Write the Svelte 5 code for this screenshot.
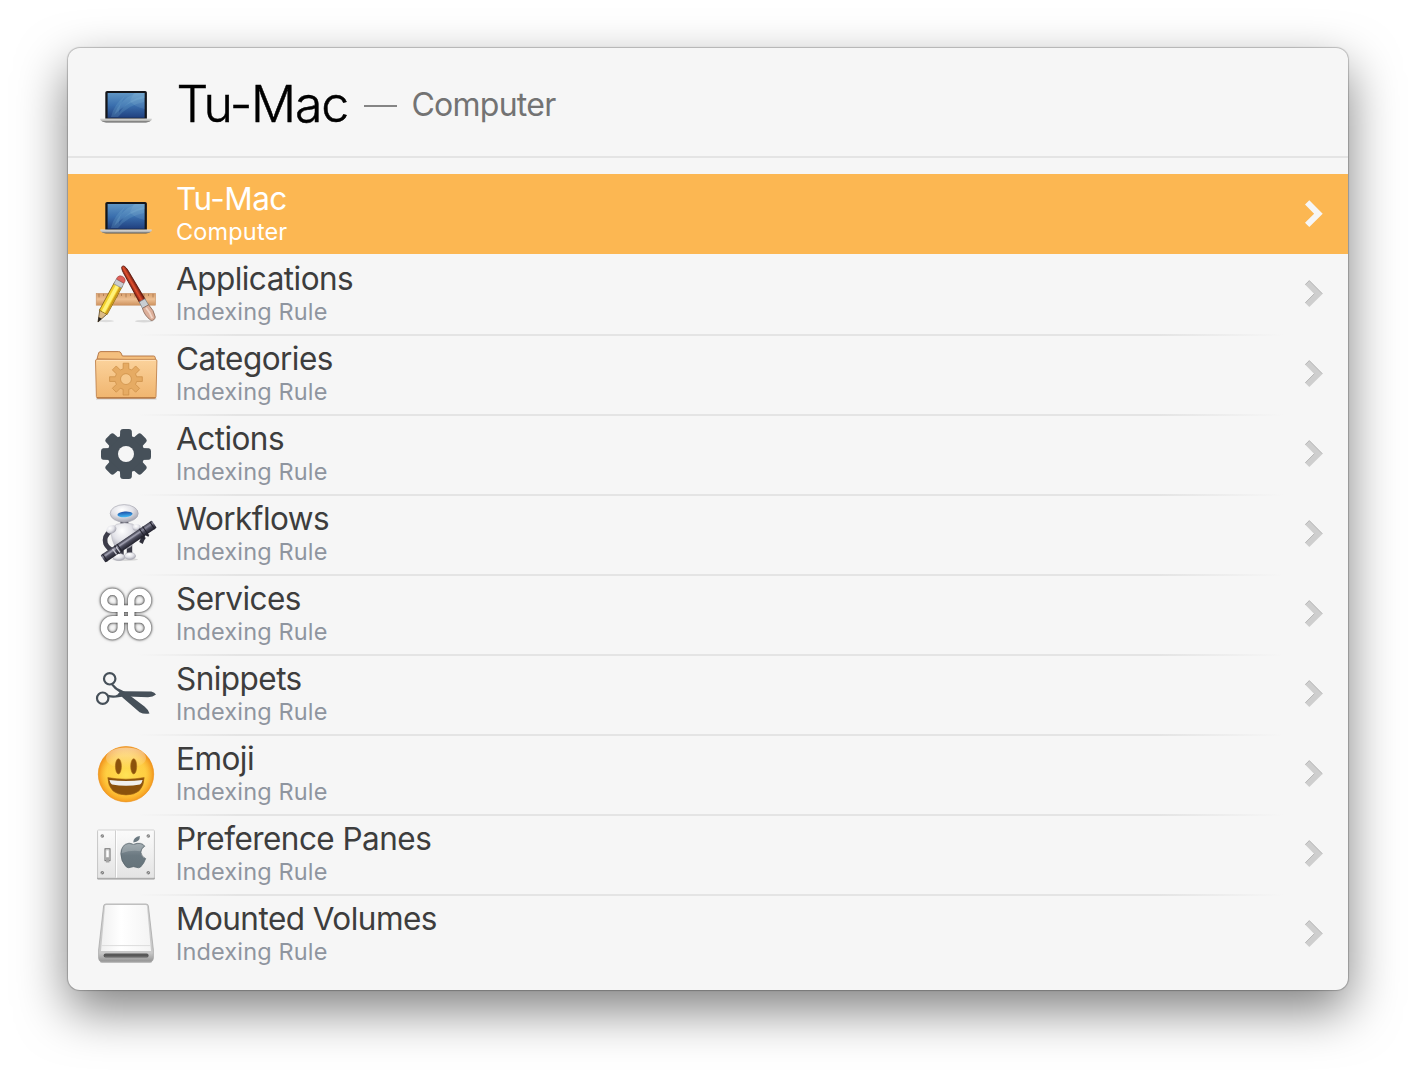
<script>
  const rows = [
    { icon: 'laptop', title: 'Tu-Mac', sub: 'Computer', selected: true },
    { icon: 'apps', title: 'Applications' },
    { icon: 'folder', title: 'Categories' },
    { icon: 'gear', title: 'Actions' },
    { icon: 'robot', title: 'Workflows' },
    { icon: 'command', title: 'Services' },
    { icon: 'scissors', title: 'Snippets' },
    { icon: 'emoji', title: 'Emoji' },
    { icon: 'prefs', title: 'Preference Panes' },
    { icon: 'drive', title: 'Mounted Volumes' }
  ];
  const teeth = [0, 45, 90, 135, 180, 225, 270, 315];
  const ticks = Array.from({ length: 13 }, (_, i) => 5 + i * 4.5);
</script>

{#snippet gearShape()}
  <mask id="gear-hole">
    <rect width="64" height="64" fill="#fff" />
    <circle cx="32" cy="32" r="8" fill="#000" />
  </mask>
  <g mask="url(#gear-hole)">
    <circle cx="32" cy="32" r="18.6" />
    {#each teeth as a}
      <path d="M25.9 16 L26.2 9 Q26.6 7 29 7 H35 Q37.4 7 37.8 9 L38.1 16Z" transform="rotate({a} 32 32)" />
    {/each}
  </g>
{/snippet}

{#snippet icon(name)}
  <svg class="icon" viewBox="0 0 64 64" aria-hidden="true">
    {#if name === 'laptop'}
      <defs>
        <linearGradient id="lap-scr" x1="0" y1="0" x2="0" y2="1">
          <stop offset="0" stop-color="#5f95c4" /><stop offset=".5" stop-color="#3a6fae" /><stop offset="1" stop-color="#20407f" />
        </linearGradient>
        <linearGradient id="lap-base" x1="0" y1="0" x2="0" y2="1">
          <stop offset="0" stop-color="#ddd" /><stop offset=".5" stop-color="#bbbbb8" /><stop offset="1" stop-color="#555" />
        </linearGradient>
      </defs>
      <rect x="11.3" y="20" width="41.6" height="29" rx="1.8" fill="#14161b" />
      <rect x="13.6" y="22" width="37" height="24.8" fill="url(#lap-scr)" />
      <path d="M17 46 Q20 33 31 25 Q25 34 25 42 Q34 28 50 25 V31 Q34 34 24 46Z" fill="#7db6d8" opacity=".22" />
      <path d="M20 44 Q26 28 42 22 H50.6 V27 Q34 30 20 44Z" fill="#8cc3e0" opacity=".2" />
      <path d="M40 22 H50.6 V38 Q39 35 36 30Z" fill="#b9d7ea" opacity=".12" />
      <path d="M6.3 47.6 H57.7 V49 Q56 51.4 52 51.4 H12 Q8 51.4 6.3 49Z" fill="url(#lap-base)" />
    {:else if name === 'apps'}
      <defs>
        <linearGradient id="ruler" x1="0" y1="0" x2="0" y2="1">
          <stop offset="0" stop-color="#d99e6b" /><stop offset=".5" stop-color="#edbf92" /><stop offset="1" stop-color="#cf935f" />
        </linearGradient>
        <linearGradient id="brush" x1="0" y1="0" x2="1" y2="0">
          <stop offset="0" stop-color="#7a1d10" /><stop offset=".45" stop-color="#e2502f" /><stop offset="1" stop-color="#5e150c" />
        </linearGradient>
      </defs>
      <ellipse cx="12" cy="59" rx="8" ry="1.2" fill="#000" opacity=".1" />
      <ellipse cx="50" cy="59.2" rx="9" ry="1.2" fill="#000" opacity=".12" />
      <rect x="2.2" y="31.4" width="59.4" height="11.8" fill="url(#ruler)" stroke="#c99468" stroke-width=".6" />
      {#each ticks as x, i}
        <path d="M{x} 31.8 v{i % 2 ? 2.2 : 3.6}" stroke="#9c7048" stroke-width=".7" />
      {/each}
      <g transform="translate(4 60) rotate(28.5)">
        <path d="M0 0 L-4.4 -12 H4.4Z" fill="#dcbb85" stroke="#6a5330" stroke-width=".8" />
        <path d="M0 .4 L-1.8 -4.6 H1.8Z" fill="#252321" />
        <rect x="-4.4" y="-43" width="8.8" height="32" fill="#f2cf2d" stroke="#8a6a18" stroke-width=".8" />
        <rect x="-2" y="-43" width="3.4" height="31.6" fill="#fff27a" />
        <rect x="2.4" y="-43" width="1.7" height="31.6" fill="#cb981b" />
        <rect x="-4.4" y="-46.5" width="8.8" height="5.4" fill="#c9ccd0" stroke="#7d8288" stroke-width=".6" />
        <path d="M-4.3 -46.5 V-49 Q-3.4 -51.8 0 -51.8 Q3.4 -51.8 4.3 -49 V-46.5Z" fill="#e0605a" stroke="#943a34" stroke-width=".5" />
      </g>
      <g transform="translate(28.4 4.2) rotate(-29.5)">
        <path d="M0 0 Q2.4 0 2.8 6 L3.5 40 H-3 L-2.4 6 Q-2 0 0 0Z" fill="url(#brush)" stroke="#5a170e" stroke-width=".8" />
        <path d="M-3 39.4 H3.5 L3.8 47 H-3.3Z" fill="#c9ced2" stroke="#6f777d" stroke-width=".6" />
        <path d="M-3.3 46.5 H3.8 Q5.8 54 3.6 60.4 Q1 63.4 -1.8 61.2 Q-5.2 54 -3.3 46.5Z" fill="#dcae99" stroke="#80604f" stroke-width=".7" />
        <path d="M0 48 Q1.4 54 .4 60" stroke="#f1d6c7" stroke-width="1.8" fill="none" />
      </g>
    {:else if name === 'folder'}
      <defs>
        <linearGradient id="fold" x1="0" y1="0" x2="0" y2="1">
          <stop offset="0" stop-color="#fbd29b" /><stop offset="1" stop-color="#f0b56f" />
        </linearGradient>
      </defs>
      <path d="M2 57 H62.6" stroke="#000" stroke-opacity=".18" stroke-width="1" />
      <path d="M3 17 L4.6 11 Q5 9.6 7 9.6 H24.6 Q26.4 9.6 27 11 L28.4 14 H59.6 Q61 14 61.2 15.4 L61.6 18Z" fill="#f4bf7e" stroke="#b1713f" stroke-width=".9" />
      <path d="M1.5 19 Q1.4 17.4 3 17.4 H61.4 Q63 17.4 62.9 19 L62 54.6 Q62 56.1 60.4 56.1 H4 Q2.4 56.1 2.4 54.6Z" fill="url(#fold)" stroke="#bf824c" stroke-width=".9" />
      <path d="M2.8 18.4 H61.6" stroke="#ffe4bc" stroke-width="1" />
      <path d="M3 55.9 H61.6" stroke="#a0602f" stroke-width=".9" />
      <g transform="translate(11.8 16.8) scale(.63)" fill="#e6ab63" stroke="#cd9048" stroke-width="1.2">
        <path d="M27.5 7 h9 v9 l4.5 1.8 6.4-6.4 6.2 6.2 -6.4 6.4 1.8 4.5 h9 v7.5 h-9 l-1.8 4.5 6.4 6.4 -6.2 6.2 -6.4-6.4 -4.5 1.8 v9 h-9 v-9 l-4.5-1.8 -6.4 6.4 -6.2-6.2 6.4-6.4 -1.8-4.5 h-9 v-7.5 h9 l1.8-4.5 -6.4-6.4 6.2-6.2 6.4 6.4 4.5-1.8Z" />
        <circle cx="32" cy="32.2" r="8.6" fill="#f6c98d" />
      </g>
    {:else if name === 'gear'}
      <g fill="#465059">{@render gearShape()}</g>
    {:else if name === 'robot'}
      <defs>
        <radialGradient id="rob" cx=".42" cy=".3" r=".75">
          <stop offset="0" stop-color="#fff" /><stop offset=".5" stop-color="#e2e2e8" /><stop offset="1" stop-color="#9a9aa6" />
        </radialGradient>
        <linearGradient id="tube" x1="0" y1="0" x2="0" y2="1">
          <stop offset="0" stop-color="#3a3a48" /><stop offset=".3" stop-color="#8d8d9e" /><stop offset=".55" stop-color="#4a4a5a" /><stop offset="1" stop-color="#20202b" />
        </linearGradient>
        <linearGradient id="eye" x1="0" y1="0" x2="0" y2="1">
          <stop offset="0" stop-color="#1c4fa8" /><stop offset="1" stop-color="#45bdf7" />
        </linearGradient>
      </defs>
      <ellipse cx="31" cy="57.6" rx="13" ry="1.4" fill="#000" opacity=".12" />
      <path d="M16.6 29 Q9.5 34 11.5 41.5 Q14 47 20 49" fill="none" stroke="#3c3c49" stroke-width="4.6" />
      <path d="M46 28 Q51 34 47 41" fill="none" stroke="#30303b" stroke-width="4" />
      <path d="M27 44 V53 M35.5 43 V52" stroke="#3a3a46" stroke-width="5.4" />
      <ellipse cx="24.8" cy="55" rx="6.2" ry="3.6" fill="url(#rob)" stroke="#a2a2ac" stroke-width=".5" />
      <ellipse cx="36" cy="54" rx="5.6" ry="3.6" fill="url(#rob)" stroke="#a2a2ac" stroke-width=".5" />
      <rect x="26.4" y="17.6" width="8" height="6" rx="1" fill="#4a4a58" />
      <path d="M22.4 22.4 Q30 19.6 38.4 22 L43 25.6 Q43 39 37 44.6 Q30 49.4 22 45.6 Q16.6 38 17.4 27Z" fill="url(#rob)" stroke="#b5b5be" stroke-width=".6" />
      <ellipse cx="17.4" cy="27.4" rx="5.2" ry="4" fill="url(#rob)" transform="rotate(-25 17.4 27.4)" />
      <ellipse cx="42.6" cy="25.4" rx="4" ry="3.2" fill="url(#rob)" />
      <ellipse cx="30.2" cy="11.4" rx="14" ry="8.8" fill="url(#rob)" stroke="#a8a8b2" stroke-width=".7" />
      <ellipse cx="31" cy="12.4" rx="7.6" ry="2.8" fill="url(#eye)" transform="rotate(-4 31 12.4)" />
      <g transform="translate(9 57) rotate(-34.2)">
        <rect x="0" y="-4.4" width="62" height="8.8" rx="1" fill="url(#tube)" />
        <path d="M2.4 -4.4 V4.4 M17 -4.6 V4.8 M20 -4.6 V4.8 M47 -4.6 V4.8 M51 -4.6 V4.8 M59.6 -4.4 V4.4" stroke="#23232d" stroke-width="1" />
        <path d="M4 -1.7 H16 M21 -1.7 H46" stroke="#9c9cac" stroke-width="1.4" />
        <path d="M44 3 L46.4 7 M49 3 L51 6.6" stroke="#262630" stroke-width="2.2" />
      </g>
      <path d="M18.6 47 l4 5.4 M22 45 l4 5.4" stroke="#c5c5cf" stroke-width="1.4" />
    {:else if name === 'command'}
      <g fill="none" class="command">
        <path d="M26.8 18.2 V45.8 A8.4 8.4 0 1 1 18.4 37.4 H45.6 A8.4 8.4 0 1 1 37.2 45.8 V18.2 A8.4 8.4 0 1 1 45.6 26.6 H18.4 A8.4 8.4 0 1 1 26.8 18.2Z" stroke="#fff" stroke-width="6.6" />
      </g>
    {:else if name === 'scissors'}
      <g fill="#465059" transform="translate(0 .8)">
        <circle cx="15.7" cy="16" r="5.7" fill="none" stroke="#465059" stroke-width="2.2" />
        <circle cx="8.7" cy="35.4" r="5.7" fill="none" stroke="#465059" stroke-width="2.2" />
        <path d="M18.6 20.6 Q22.5 25.4 27.4 27.3 Q31.5 29.3 34.5 31.6 L50.5 43.6 Q54.5 46.8 55.5 50.7 Q50 51.8 45.6 49.4 L28.8 35 Q26.2 32.6 25.3 29.4 Q20.6 27 17 22Z" />
        <path d="M14 32 Q18 33 21.4 32.6 Q24 32 25 30 Q27 28.3 30 28.4 L57.3 28.6 Q60.8 29.3 62 31.8 Q59 34.4 54 34.4 L34 33.8 Q29.5 33.3 26 34.1 Q19.6 35.4 14.3 34.4Z" />
      </g>
    {:else if name === 'emoji'}
      <defs>
        <linearGradient id="face" x1="0" y1="0" x2="0" y2="1">
          <stop offset="0" stop-color="#fdc550" /><stop offset=".5" stop-color="#ffd246" /><stop offset="1" stop-color="#ffb52c" />
        </linearGradient>
        <radialGradient id="faceglow" cx=".5" cy=".52" r=".5">
          <stop offset="0" stop-color="#ffe75a" stop-opacity=".85" /><stop offset=".7" stop-color="#ffcb3c" stop-opacity=".4" /><stop offset="1" stop-color="#ef8b16" stop-opacity=".85" />
        </radialGradient>
        <linearGradient id="shine" x1="0" y1="0" x2="0" y2="1">
          <stop offset="0" stop-color="#fff" stop-opacity=".5" /><stop offset="1" stop-color="#fff" stop-opacity="0" />
        </linearGradient>
      </defs>
      <circle cx="32" cy="32.2" r="27.7" fill="url(#face)" />
      <circle cx="32" cy="32.2" r="27.7" fill="url(#faceglow)" stroke="#eb9425" stroke-width=".6" />
      <ellipse cx="32" cy="16" rx="20" ry="10.5" fill="url(#shine)" />
      <g fill="#8b520c" stroke="#a96b16" stroke-width=".6">
        <ellipse cx="24.4" cy="24.3" rx="3" ry="7.6" /><ellipse cx="39.7" cy="24.3" rx="3" ry="7.6" />
        <path d="M13.8 35.6 Q32 38.8 50.2 35.6 Q49.5 53 32 53 Q14.5 53 13.8 35.6Z" />
      </g>
      <path d="M15.4 38 Q32 40.2 48.6 38 Q48 41 46 42.4 Q32 45 18 42.4 Q16 41 15.4 38Z" fill="#f0f0ee" />
    {:else if name === 'prefs'}
      <defs>
        <linearGradient id="plate" x1="0" y1="0" x2="0" y2="1">
          <stop offset="0" stop-color="#fbfbfb" /><stop offset="1" stop-color="#e4e4e4" />
        </linearGradient>
        <linearGradient id="apple" x1="0" y1="0" x2="0" y2="1">
          <stop offset="0" stop-color="#8d999f" /><stop offset=".5" stop-color="#6b7981" /><stop offset="1" stop-color="#66747b" />
        </linearGradient>
      </defs>
      <rect x="3.2" y="9" width="57.6" height="48.6" rx="1" fill="#989898" />
      <rect x="3.6" y="8" width="56.8" height="48" rx=".8" fill="url(#plate)" stroke="#cacaca" stroke-width=".8" />
      <path d="M21.5 8.4 V55.6" stroke="#cfcfcf" /><path d="M22.5 8.4 V55.6" stroke="#fff" />
      {#each [[8.3, 14], [54.3, 14], [8.3, 50.7], [54.3, 50.7]] as [x, y]}
        <circle cx={x} cy={y} r="1.8" fill="#808080" /><path d="M{x - 1} {y + 1} l2 -2" stroke="#ddd" stroke-width=".6" />
      {/each}
      <rect x="11" y="26.8" width="5" height="11.8" fill="#f6f6f6" stroke="#666" stroke-width="1" />
      <path d="M11.8 35 h3.6 v5.4 h-3.6Z" fill="#a5a5a5" /><rect x="12" y="28" width="3" height="7.4" fill="#fff" stroke="#aaa" stroke-width=".5" />
      <path d="M39.4 22.4 Q43 20.8 46.5 21.4 Q49.4 22 50.8 24.2 Q46.8 26.6 46.9 30.4 Q47.3 34.8 51.7 36.6 Q50 41.7 46.6 45 Q44.7 46.4 42.6 45.4 Q39.5 43.9 36.4 45.4 Q34 46.7 31.8 44.4 Q26.8 39 26.8 31.7 Q27.2 22.2 35 21.2 Q37.2 21.3 39.4 22.4Z" fill="url(#apple)" stroke="#56636a" stroke-width=".7" />
      <path d="M27.6 31.2 Q28 22.8 35 22 Q39 23.6 43 22.2 Q47 21.4 49.6 24 Q46.6 26.4 46.4 29.2 Q37 27.8 27.6 31.2Z" fill="#fff" opacity=".2" />
      <path d="M39.3 20.4 Q39.2 15 45.9 13.9 Q46.2 19.6 39.3 20.4Z" fill="#6c7a82" />
    {:else}
      <defs>
        <linearGradient id="top" x1="0" y1="0" x2="1" y2="0">
          <stop offset="0" stop-color="#f0f0f0" /><stop offset=".4" stop-color="#fff" /><stop offset="1" stop-color="#f4f4f4" />
        </linearGradient>
        <linearGradient id="front" x1="0" y1="0" x2="0" y2="1">
          <stop offset="0" stop-color="#cfcfcf" /><stop offset=".85" stop-color="#c8c8c8" /><stop offset="1" stop-color="#949494" />
        </linearGradient>
      </defs>
      <rect x="6" y="57" width="52" height="3.8" rx="1.9" fill="#000" opacity=".3" />
      <path d="M9.6 4 Q9.8 2 12 2 H52 Q54.2 2 54.4 4 L59.4 48 V56 Q59.4 59.6 56 59.6 H8 Q4.6 59.6 4.6 56 V48Z" fill="url(#front)" stroke="#a2a2a2" stroke-width=".7" />
      <path d="M11 4.2 Q11.2 3 12.4 3 H51.6 Q52.8 3 53 4.2 L57 49 H7Z" fill="url(#top)" />
      <path d="M7.6 43.6 H56.6" stroke="#dcdcdc" />
      <rect x="9.6" y="51.6" width="45" height="4" rx="2" fill="#585858" /><path d="M11 55.1 H53.4" stroke="#888" stroke-width=".8" />
    {/if}
  </svg>
{/snippet}

<div class="desktop">
  <main class="panel">
    <header>
      {@render icon('laptop')}
      <h1>Tu-Mac</h1>
      <span class="dash"></span>
      <span class="kind">Computer</span>
    </header>
    <ul>
      {#each rows as row}
        <li class:selected={row.selected}>
          {@render icon(row.icon)}
          <div class="text">
            <span class="title">{row.title}</span>
            <span class="sub">{row.sub ?? 'Indexing Rule'}</span>
          </div>
          <svg class="chevron" viewBox="0 0 18 28" aria-hidden="true">
            <path class="fill" d="M0 4.6 L4.3 .3 L17.7 13.7 L4.3 27.1 L0 22.8 L9.1 13.7Z" />
            <path class="edge" d="M.3 4.6 L4.3 .7 L17.3 13.7 M.3 22.8 L9.3 13.7" />
          </svg>
        </li>
      {/each}
    </ul>
  </main>
</div>

<style>
  :global(body) {
    background: #fff;
  }
  .desktop {
    box-sizing: border-box;
    height: 1078px;
    padding: 48px 68px;
  }
  .panel {
    width: 1280px;
    height: 942px;
    overflow: hidden;
    border-radius: 12px;
    background: #f6f6f6;
    box-shadow: 0 0 1px 1px rgba(0, 0, 0, 0.22), 0 20px 50px rgba(0, 0, 0, 0.5);
    font-family: Inter, 'Liberation Sans', sans-serif;
  }
  header {
    box-sizing: border-box;
    height: 110px;
    padding: 0 26px;
    display: flex;
    align-items: center;
    border-bottom: 2px solid #e4e4e4;
  }
  .icon {
    display: block;
    width: 64px;
    height: 64px;
    flex: none;
  }
  header .icon {
    margin-top: 1px;
  }
  h1 {
    margin: 3px 0 0 18.5px;
    font-size: 50px;
    line-height: 60px;
    font-weight: 300;
    letter-spacing: -1.2px;
    color: #000;
    -webkit-text-stroke: 0.5px #000;
  }
  .dash {
    width: 33px;
    height: 2px;
    margin: 7px 14px 0 16.5px;
    background: #858585;
  }
  .kind {
    margin-top: 6px;
    font-size: 32px;
    line-height: 40px;
    letter-spacing: -0.75px;
    color: #737373;
  }
  ul {
    list-style: none;
    margin: 0;
    padding: 16px 0;
  }
  li {
    height: 80px;
    padding: 0 25px 0 26px;
    display: flex;
    align-items: center;
  }
  li:nth-child(n + 3) {
    background: linear-gradient(90deg, transparent 70px, #e4e4e4 170px, #e4e4e4 1090px, transparent 1215px) top / 100% 2px no-repeat;
  }
  li.selected {
    background: #fcb752;
  }
  .text {
    flex: 1;
    height: 80px;
    margin-left: 18px;
    display: flex;
    flex-direction: column;
  }
  .title {
    margin-top: 5px;
    font-size: 31.5px;
    line-height: 40px;
    letter-spacing: -0.54px;
    color: #3d3d3d;
  }
  .sub {
    margin-top: -2px;
    font-size: 23.5px;
    line-height: 30px;
    letter-spacing: 0.15px;
    color: #8f959f;
  }
  .selected .title,
  .selected .sub {
    color: #fff;
  }
  .command {
    filter: drop-shadow(0 0 0.8px rgba(0, 0, 0, 0.6)) drop-shadow(0 0.5px 1.5px rgba(0, 0, 0, 0.6));
  }
  .chevron {
    width: 18px;
    height: 28px;
    flex: none;
  }
  .chevron .fill {
    fill: #cecece;
  }
  .chevron .edge {
    fill: none;
    stroke: #b8b8b8;
    stroke-width: 1;
  }
  .selected .fill {
    fill: #f6f6f6;
  }
  .selected .edge {
    stroke: none;
  }
</style>
